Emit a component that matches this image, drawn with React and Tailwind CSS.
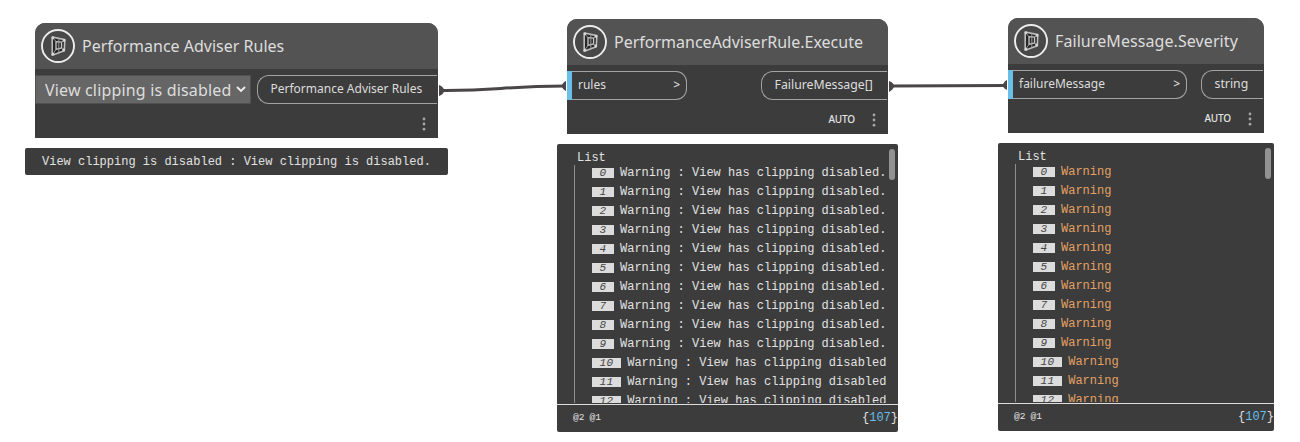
import React from "react";

const SANS = "font-['Noto_Sans','Open_Sans',sans-serif]";
const MONO = "font-['Liberation_Mono',monospace]";

function NodeIcon() {
  return (
    <svg width="34" height="34" viewBox="0 0 34 34" fill="none" className="shrink-0">
      <circle cx="17" cy="17" r="16" fill="#484848" stroke="#ececec" strokeWidth="1.9" />
      <path d="M11.2 8 L23.8 10.6 L23.3 21.8 L11.2 26.2 Z" fill="#262626" stroke="#bdbdbd" strokeWidth="1.6" strokeLinejoin="round" />
      <path d="M15 12.6 L20.6 13.2 V19 L15 20.4 Z" fill="#303030" stroke="#c4c4c4" strokeWidth="1.3" />
      <path d="M17.8 9.5 V23 M11.5 25.5 L15 20.4 M20.6 19 L23.3 21.5 M11.5 8.5 L15 12.6 M23.5 11 L20.6 13.2" stroke="#a2a2a2" strokeWidth="0.9" />
      <g fill="#d8d8d8">
        <circle cx="12" cy="8.8" r="1.4" />
        <circle cx="23" cy="11.4" r="1.4" />
        <circle cx="22.6" cy="21" r="1.4" />
        <circle cx="12" cy="25.2" r="1.4" />
      </g>
    </svg>
  );
}

function Header({ title, className }) {
  return (
    <div className="flex h-[46px] shrink-0 items-center gap-[7px] rounded-t-[10px] bg-[#535353] pl-[6px]">
      <NodeIcon />
      <span className={`whitespace-nowrap leading-[22px] text-[#dddddd] ${className}`}>{title}</span>
    </div>
  );
}

function Footer({ auto }) {
  return (
    <div className="flex h-[34px] items-center justify-end gap-[17px] pr-[12px] pt-[5px]">
      {auto && <span className="pb-px text-[10px] font-medium leading-none tracking-[-0.15px] text-[#e4e4e4]">AUTO</span>}
      <svg width="4" height="14" viewBox="0 0 4 14" fill="#a5a5a5">
        <circle cx="2" cy="2" r="1.4" />
        <circle cx="2" cy="7" r="1.4" />
        <circle cx="2" cy="12.2" r="1.4" />
      </svg>
    </div>
  );
}

function InputPort({ name, className }) {
  return (
    <div className={`flex h-[29px] ${className}`}>
      <div className="w-[5px] bg-[#69bfe8]" />
      <div className="flex flex-1 items-center justify-between rounded-r-[11px] border border-l-0 border-[#a3a3a3] pb-px pl-[6px] pr-[6px] text-[12px] leading-none text-[#dddddd]">
        <span>{name}</span>
        <span className="font-medium">&gt;</span>
      </div>
    </div>
  );
}

function OutputPort({ name, className }) {
  return (
    <div className={`mr-px flex h-[29px] items-center whitespace-nowrap rounded-l-[12px] border border-r-0 border-[#a3a3a3] pb-px pl-[12.5px] leading-none text-[#dddddd] ${className}`}>
      {name}
    </div>
  );
}

function ListPreview({ text, wideText, color, className }) {
  return (
    <div className={`absolute flex h-[288px] flex-col rounded-[2px] bg-[#3c3c3c] text-[12px] text-[#e2e2e2] ${MONO} ${className}`}>
      <div className="flex h-[260px] pr-[3px]">
        <div className="flex flex-1 flex-col overflow-hidden pl-[17px]">
          <div className="h-[21px] shrink-0 pl-[3px] pt-[7px] leading-[14px]">List</div>
          <div className="flex h-[238px] flex-col overflow-hidden border-l border-[#8f8f8f] pl-[17px]">
            {Array.from({ length: 13 }, (_, i) => (
              <div key={i} className="-mt-[2px] mb-[2.05px] flex h-[19px] shrink-0 items-center gap-[6px] whitespace-nowrap">
                <span className="flex h-[10px] items-center bg-[#dcdcdc] px-[7.4px] italic text-[#454545]">
                  <span className="text-[11px] leading-[10px] tracking-[0.6px]">{i}</span>
                </span>
                <span className={color}>{i < 10 ? text : wideText}</span>
              </div>
            ))}
          </div>
        </div>
        <div className="ml-[3px] mt-[5px] h-[31px] w-[6px] rounded-full bg-[#929292]" />
      </div>
      <div className="flex h-[28px] items-center justify-between border-t border-[#dddddd] pl-[16px]">
        <span className="flex gap-[5px] text-[9.6px]"><span>@2</span><span>@1</span></span>
        <span className="pb-[2px]">{"{"}<span className="text-[#69bfe8]">107</span>{"}"}</span>
      </div>
    </div>
  );
}

export default function App() {
  return (
    <main className={`relative h-[442px] w-[1300px] overflow-hidden bg-white ${SANS}`}>
      <svg className="absolute inset-0" width="1300" height="442" fill="none">
        <path d="M440 90.5 C500 91 500 86 566 86" stroke="#4a4647" strokeWidth="3" />
        <path d="M890 86 L1007 85.5" stroke="#4a4647" strokeWidth="3" />
        <g fill="#4a4647">
          <path d="M439 85 Q444 87 444 90.5 Q444 94 439 96 Z" />
          <path d="M566 81 Q562 83 562 86 Q562 89 566 91 Z" />
          <path d="M889 81 Q894 83 894 86 Q894 89 889 92 Z" />
          <path d="M1007 80 Q1003 82 1003 85.5 Q1003 88 1007 90 Z" />
        </g>
      </svg>

      <section className="absolute left-[35px] top-[23px] flex h-[115px] w-[403px] flex-col rounded-t-[10px] bg-[#3c3c3c]">
        <Header title="Performance Adviser Rules" className="text-[16px]" />
        <div className="mt-[6px] flex justify-between">
          <div className="flex h-[29px] w-[216px] items-center justify-between border border-[#505050] bg-[#666666] pl-[9px] pr-[4px] text-[16px] leading-none tracking-[0.17px] text-[#dddddd]">
            <span className="whitespace-nowrap">View clipping is disabled</span>
            <svg width="10" height="7" viewBox="0 0 10 7" fill="none" stroke="#eeeeee" strokeWidth="1.9"><path d="M1 1 L5 5 L9 1" /></svg>
          </div>
          <OutputPort name="Performance Adviser Rules" className="w-[180px] text-[12px]" />
        </div>
        <Footer />
      </section>

      <section className="absolute left-[567px] top-[19px] flex h-[115px] w-[321px] flex-col rounded-t-[10px] bg-[#3c3c3c]">
        <Header title="PerformanceAdviserRule.Execute" className="text-[16px]" />
        <div className="mt-[6px] flex justify-between">
          <InputPort name="rules" className="w-[120px]" />
          <OutputPort name="FailureMessage[]" className="w-[126px] text-[12.3px]" />
        </div>
        <Footer auto />
      </section>

      <section className="absolute left-[1008px] top-[18px] flex h-[115px] w-[256px] flex-col rounded-t-[10px] bg-[#3c3c3c]">
        <Header title="FailureMessage.Severity" className="text-[16px] tracking-[0.08px]" />
        <div className="mt-[6px] flex justify-between">
          <InputPort name="failureMessage" className="w-[179px]" />
          <OutputPort name="string" className="w-[62px] text-[12.3px]" />
        </div>
        <Footer auto />
      </section>

      <div className={`absolute left-[25px] top-[148px] flex h-[27px] w-[423px] items-center whitespace-nowrap rounded-[2px] bg-[#3c3c3c] pl-[17px] text-[12px] text-[#e2e2e2] ${MONO}`}>
        View clipping is disabled : View clipping is disabled.
      </div>
      <ListPreview
        className="left-[557px] top-[144px] w-[341px]"
        color="text-[#e2e2e2]"
        text="Warning : View has clipping disabled."
        wideText="Warning : View has clipping disabled"
      />
      <ListPreview className="left-[998px] top-[143px] w-[276px]" color="text-[#e3a163]" text="Warning" wideText="Warning" />
    </main>
  );
}
